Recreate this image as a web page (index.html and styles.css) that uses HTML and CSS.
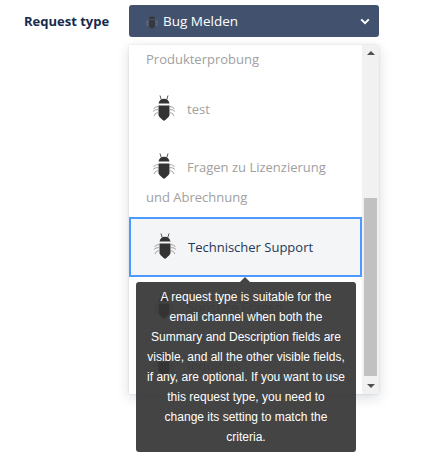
FILE: index.html
```html
<!DOCTYPE html>
<html lang="en">
<head>
    <meta charset="UTF-8">
    <meta name="viewport" content="width=device-width, initial-scale=1.0">
    <title>Request type</title>
    <link rel="stylesheet" href="styles.css">
</head>
<body>

    <svg class="icon-defs" aria-hidden="true">
        <symbol id="bug" viewBox="0 0 22 26">
            <path d="M7 0.5 L8.2 4.5 M15 0.5 L13.8 4.5" fill="none" stroke="#555" stroke-width="1"/>
            <path d="M5.5 8.6 C6 5.6 8 3.8 11 3.8 C14 3.8 16 5.6 16.5 8.6 Z" fill="#333"/>
            <path d="M5.5 10.4 H16.5 V20 C16.5 21.5 13 24.5 11 26 C9 24.5 5.5 21.5 5.5 20 Z" fill="#333"/>
            <path d="M5.5 11.5 L2.5 12 L0.5 14 M5.5 14.5 L2 15 L0 16.5 M5.5 17.5 L2.5 18.5 L1 21 M16.5 11.5 L19.5 12 L21.5 14 M16.5 14.5 L20 15 L22 16.5 M16.5 17.5 L19.5 18.5 L21 21" fill="none" stroke="#999" stroke-width="0.9"/>
        </symbol>
    </svg>

    <!-- Request type field -->
    <div class="field">
        <div class="field-label">Request type</div>
        <div class="field-control">
            <div class="select-btn">
                <svg class="select-icon"><use href="#bug"/></svg>
                <span class="select-text">Bug Melden</span>
                <svg class="chevron" viewBox="0 0 10 7"><path d="M1.2 1.4 L5 5.2 L8.8 1.4" fill="none" stroke="#fff" stroke-width="2"/></svg>
            </div>

            <!-- Dropdown -->
            <div class="dropdown">
                <div class="list">
                    <div class="group-label">Produkterprobung</div>
                    <div class="item">
                        <svg class="bug"><use href="#bug"/></svg>test
                    </div>
                    <div class="item item-wrapped">
                        <svg class="bug"><use href="#bug"/></svg>Fragen zu Lizenzierung und Abrechnung
                    </div>
                    <div class="item item-selected">
                        <svg class="bug"><use href="#bug"/></svg>Technischer Support
                    </div>
                    <div class="item item-after">
                        <svg class="bug"><use href="#bug"/></svg>Sonstige Fragen
                    </div>
                    <div class="item">
                        <svg class="bug"><use href="#bug"/></svg>Inquiries
                    </div>
                </div>
                <div class="scrollbar">
                    <div class="arrow-up"></div>
                    <div class="track"><div class="thumb"></div></div>
                    <div class="arrow-down"></div>
                </div>

                <!-- Tooltip over the list -->
                <div class="tooltip">A request type is suitable for the email channel when both the Summary and Description fields are visible, and all the other visible fields, if any, are optional. If you want to use this request type, you need to change its setting to match the criteria.</div>
            </div>
        </div>
    </div>

</body>
</html>
```

FILE: styles.css
```css
body {
    font-family: "Open Sans", Arial, sans-serif;
    background-color: white;
    margin: 0;
    padding: 5px 0 0 24px;
    box-sizing: border-box;
    min-height: 100vh;
}

.icon-defs {
    display: none;
}

.field {
    display: flex;
    align-items: flex-start;
}

.field-label {
    width: 105px;
    line-height: 32px;
    font-size: 13px;
    font-weight: 700;
    color: #172b4d;
}

.field-control {
    width: 250px;
}

/* Select button */
.select-btn {
    height: 32px;
    display: flex;
    align-items: center;
    padding: 0 9px 0 16px;
    background-color: #42526e;
    border-radius: 3px;
    color: white;
    font-size: 13.5px;
}

.select-icon {
    width: 14px;
    height: 15px;
    margin-right: 4px;
    opacity: 0.8;
}

.select-text {
    flex-grow: 1;
}

.chevron {
    width: 10px;
    height: 7px;
}

/* Dropdown */
.dropdown {
    position: relative;
    display: flex;
    height: 349px;
    margin-top: 8px;
    background-color: white;
    box-shadow: 0 4px 12px rgba(9, 30, 66, 0.15), 0 0 2px rgba(9, 30, 66, 0.12);
}

.list {
    flex-grow: 1;
    overflow: hidden;
    font-size: 13px;
    line-height: 30px;
    color: #a0a0a0;
}

.group-label {
    padding-left: 17px;
    line-height: 28px;
    margin-bottom: 7px;
}

.item {
    padding: 14px 10px 14px 17px;
}

.item-wrapped {
    padding-bottom: 5px;
}

.item-selected {
    padding: 13px 10px 13px 16px;
    border: 2px solid #4c9aff;
    background-color: #f4f5f7;
    color: #253858;
}

.item-after {
    padding-top: 15px;
}

.bug {
    width: 22px;
    height: 26px;
    margin: 0 12px 0 7px;
    vertical-align: -7px;
}

/* Scrollbar */
.scrollbar {
    flex: 0 0 17px;
    display: flex;
    flex-direction: column;
    background-color: #f1f1f1;
}

.arrow-up,
.arrow-down {
    width: 0;
    height: 0;
    border-left: 4px solid transparent;
    border-right: 4px solid transparent;
}

.arrow-up {
    margin: 6px auto 0;
    border-bottom: 4px solid #505050;
}

.arrow-down {
    margin: 0 auto 6px;
    border-top: 4px solid #505050;
}

.track {
    flex-grow: 1;
    padding: 143px 2px 0;
}

.thumb {
    height: 178px;
    background-color: #c1c1c1;
}

/* Tooltip */
.tooltip {
    position: absolute;
    top: 237px;
    left: 7px;
    width: 220px;
    box-sizing: border-box;
    padding: 5px 10px;
    background-color: rgba(52, 52, 52, 0.92);
    border-radius: 3px;
    color: white;
    font-family: "Liberation Sans", Arial, sans-serif;
    font-size: 12px;
    line-height: 20px;
    text-align: center;
}

.tooltip::before {
    content: "";
    position: absolute;
    top: -5px;
    left: 104px;
    border-left: 5px solid transparent;
    border-right: 5px solid transparent;
    border-bottom: 5px solid #444;
}
```
